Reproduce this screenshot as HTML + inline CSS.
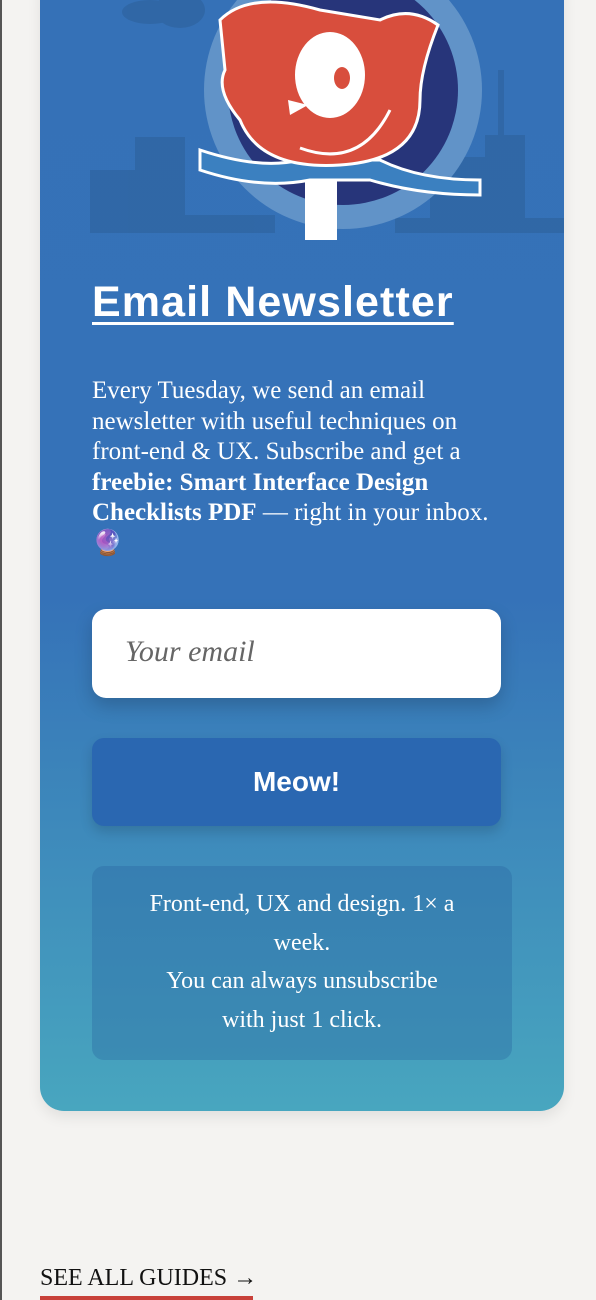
<!DOCTYPE html>
<html><head><meta charset="utf-8"><style>
*{margin:0;padding:0;box-sizing:border-box}
body{width:596px;height:1300px;background:#f4f3f1;position:relative;overflow:hidden;font-family:"Liberation Serif",serif}
.edge{position:absolute;left:0;top:0;width:2px;height:1300px;background:#555}
.card{position:absolute;left:40px;top:-30px;width:524px;height:1141px;border-radius:24px;background:linear-gradient(#3571b7 0%,#3572b8 55%,#48a6bf 100%);box-shadow:0 6px 14px rgba(0,0,0,.08);overflow:hidden}
h2{position:absolute;left:92px;top:278px;font-family:"Liberation Sans",sans-serif;font-weight:bold;font-size:43px;color:#fff;text-decoration:underline;text-decoration-thickness:3px;text-underline-offset:6px;letter-spacing:1.1px}
.p{position:absolute;left:92px;top:376px;width:400px;color:#fff;font-size:25px;line-height:30.5px}
.in{position:absolute;left:92px;top:609px;width:409px;height:89px;background:#fff;border-radius:14px;box-shadow:0 8px 18px rgba(0,0,0,.18);font-style:italic;color:#666;font-size:30px;padding:26px 0 0 33px}
.btn{position:absolute;left:92px;top:738px;width:409px;height:88px;background:#2a67b1;border-radius:12px;box-shadow:0 6px 12px rgba(0,0,0,.15);color:#fff;font-family:"Liberation Sans",sans-serif;font-weight:bold;font-size:28px;text-align:center;line-height:88px}
.info{position:absolute;left:92px;top:866px;width:420px;height:194px;background:rgba(40,100,160,.35);border-radius:12px;color:#fff;font-size:24px;line-height:38.5px;text-align:center;padding:19px 55px 0}
.see{position:absolute;left:40px;top:1265px;font-size:24px;color:#111}
.bar{position:absolute;left:40px;top:1296px;width:213px;height:4px;background:#c8413a}
</style></head><body>
<div class="edge"></div>
<div class="card">
<svg width="524" height="263" style="position:absolute;left:0;top:30px">
<g transform="translate(0,30)">
<g fill="#2f64a0" opacity=".7">
<ellipse cx="110" cy="-18" rx="28" ry="12"/><ellipse cx="140" cy="-20" rx="25" ry="18"/>
<rect x="50" y="140" width="45" height="63"/><rect x="95" y="107" width="50" height="96"/><rect x="145" y="185" width="90" height="18"/>
<rect x="355" y="188" width="169" height="15"/><rect x="390" y="127" width="90" height="76"/><rect x="445" y="105" width="40" height="98"/><rect x="458" y="40" width="6" height="70"/>
</g>
<circle cx="303" cy="60" r="139" fill="#6193c8"/>
<circle cx="303" cy="60" r="115" fill="#27357a"/>
<rect x="265" y="120" width="32" height="90" fill="#fff"/>
<path d="M160 120 Q220 140 260 130 L340 130 Q380 150 440 150 L440 165 Q380 165 330 150 L270 150 Q220 160 160 140Z" fill="#3b80c0" stroke="#fff" stroke-width="3"/>
<path d="M180 -10 Q210 -40 280 -20 L340 -10 Q370 -25 398 -5 Q380 40 380 70 Q380 130 300 135 Q220 140 200 90 Q175 60 185 40Z" fill="#d84e3d" stroke="#fff" stroke-width="3"/>
<ellipse cx="290" cy="45" rx="35" ry="43" fill="#fff"/><ellipse cx="302" cy="48" rx="8" ry="11" fill="#d84e3d"/>
<path d="M248 70 L268 75 L250 85Z" fill="#fff"/>
<path d="M260 118 Q320 140 350 80" fill="none" stroke="#fff" stroke-width="3"/>
</g>
</svg>
</div>
<h2>Email Newsletter</h2>
<div class="p">Every Tuesday, we send an email newsletter with useful techniques on front-end &amp; UX. Subscribe and get a <b>freebie: Smart Interface Design Checklists PDF</b> — right in your inbox. 🔮</div>
<div class="in">Your email</div>
<div class="btn">Meow!</div>
<div class="info">Front-end, UX and design. 1× a week.<br>You can always unsubscribe with just 1 click.</div>
<div class="see">SEE ALL GUIDES →</div>
<div class="bar"></div>
</body></html>
